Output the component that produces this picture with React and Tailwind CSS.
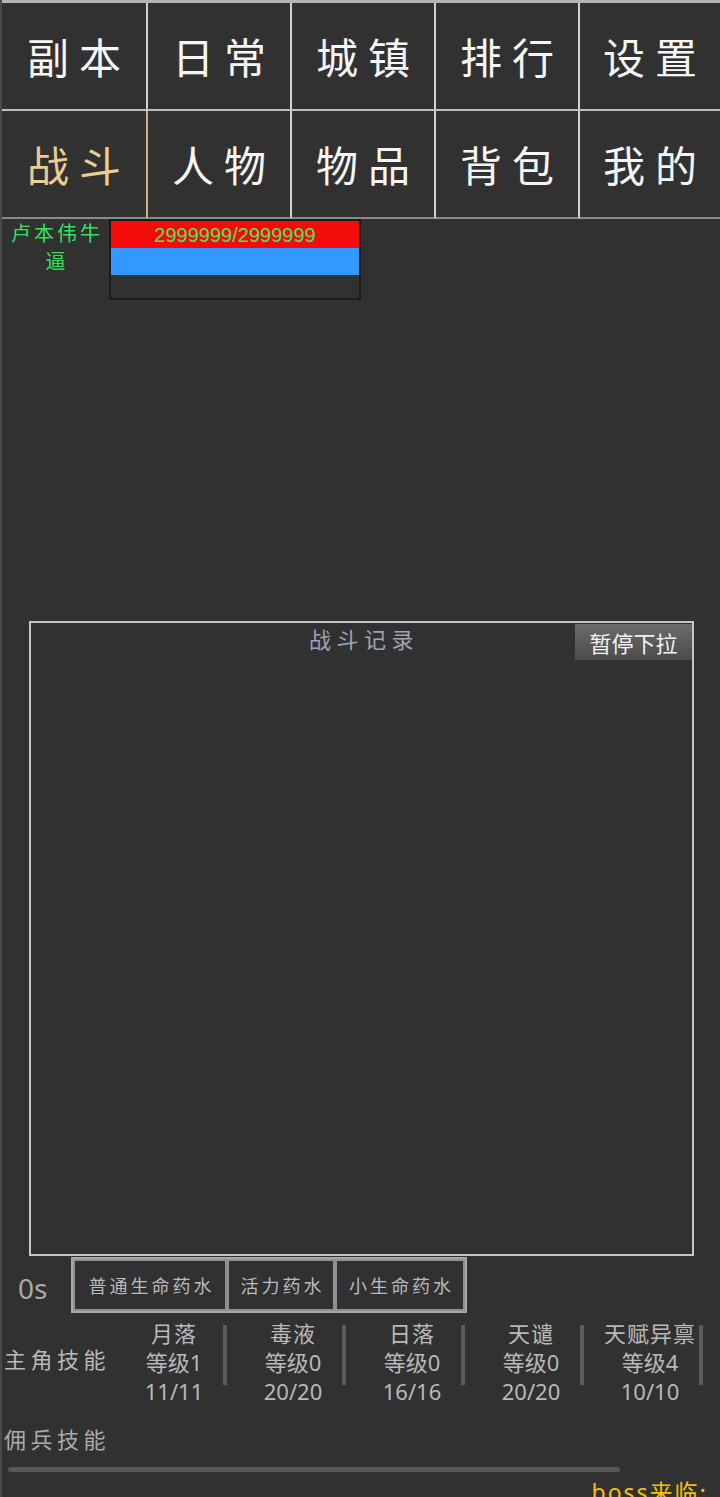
import React from "react";

const navRow1 = ["副本", "日常", "城镇", "排行", "设置"];
const navRow2 = ["战斗", "人物", "物品", "背包", "我的"];

const skills = [
  { name: "月落", lv: "等级1", cnt: "11/11" },
  { name: "毒液", lv: "等级0", cnt: "20/20" },
  { name: "日落", lv: "等级0", cnt: "16/16" },
  { name: "天谴", lv: "等级0", cnt: "20/20" },
  { name: "天赋异禀", lv: "等级4", cnt: "10/10" },
];

function NavCell({ label, row, col, active }) {
  const colBorder =
    col === 4
      ? "border-r-0"
      : active
      ? "border-r-2 border-r-[#cdb47c]"
      : "border-r-2 border-r-[#d0d0d0]";
  const rowBorder = row === 0 ? "border-b-2 border-b-[#bdbdbd]" : "border-b-2 border-b-[#8a8a8a]";
  return (
    <div
      className={`h-[108px] flex items-center justify-center ${colBorder} ${rowBorder}`}
    >
      <span
        className={`text-[42px] leading-none tracking-[10px] pl-[10px] -mt-[1px] ${
          active ? "text-[#ebcc92]" : "text-[#f6f6f6]"
        }`}
      >
        {label}
      </span>
    </div>
  );
}

export default function App() {
  return (
    <div className="w-[720px] min-h-[1497px] bg-[#313131] border-l-2 border-l-[#4a4a4a] overflow-hidden font-['Noto_Sans_CJK_SC',sans-serif]">
      {/* Nav */}
      <div className="grid grid-cols-[146px_144px_144px_144px_1fr] border-t-[3px] border-t-[#b4b4b4]">
        {navRow1.map((l, i) => (
          <NavCell key={l} label={l} row={0} col={i} />
        ))}
        {navRow2.map((l, i) => (
          <NavCell key={l} label={l} row={1} col={i} active={i === 0} />
        ))}
      </div>

      {/* Character */}
      <div className="flex items-start">
        <div className="w-[107px] text-center text-[20px] leading-[28px] tracking-[3px] pl-[3px] text-[#35e05f]">
          卢本伟牛逼
        </div>
        <div className="w-[252px] h-[81px] border-2 border-[#1b1b1b] flex flex-col">
          <div className="h-[27px] bg-[#f40c0c] flex items-center justify-center text-[20px] leading-none text-[#4ae65a] font-['Liberation_Sans',sans-serif]">
            2999999/2999999
          </div>
          <div className="h-[27px] bg-[#3398ff]"></div>
          <div className="flex-1"></div>
        </div>
      </div>

      {/* Battle log */}
      <div className="relative mt-[321px] ml-[27px] w-[665px] h-[635px] border-2 border-[#c6c6c6]">
        <div className="text-center text-[22px] leading-[30px] tracking-[5.5px] pl-[5px] text-[#9ea3b2]">
          战斗记录
        </div>
        <button className="absolute top-[1px] right-[0px] w-[117px] h-[36px] bg-gradient-to-b from-[#6c6c6c] to-[#4b4b4b] text-[22px] leading-none text-[#f2f2f2] font-['Noto_Sans_CJK_SC',sans-serif]">
          暂停下拉
        </button>
      </div>

      {/* Potions */}
      <div className="flex items-center h-[56px] mt-[1px]">
        <div className="pl-[16px] w-[69px] pt-[5px] text-[28px] leading-none text-[#a9a9a9] font-['Noto_Sans',sans-serif]">
          0s
        </div>
        <div className="flex h-[56px] border-2 border-[#a7a7ae]">
          {["普通生命药水", "活力药水", "小生命药水"].map((p, i) => (
            <div
              key={p}
              className={`h-full flex items-center justify-center border-2 border-[#8f8f96] text-[18px] leading-none tracking-[3px] pl-[3px] text-[#b9b9c0] ${
                i === 0 ? "w-[154px]" : i === 1 ? "w-[108px]" : "w-[130px]"
              }`}
            >
              {p}
            </div>
          ))}
        </div>
      </div>

      {/* Main skills */}
      <div className="flex items-start pt-[5px]">
        <div className="w-[124px] h-[80px] flex items-center pl-[2px] text-[22px] leading-none tracking-[4.5px] text-[#b9b9b9]">
          主角技能
        </div>
        {skills.map((s) => (
          <div key={s.name} className="w-[120px] flex items-start">
            <div className="w-[98px] text-center text-[22px] leading-[29px] text-[#b9b9b9] whitespace-nowrap">
              <div className="tracking-[1px]">{s.name}</div>
              <div>
                {s.lv.slice(0, 2)}
                <span className="font-['Noto_Sans',sans-serif]">{s.lv.slice(2)}</span>
              </div>
              <div className="font-['Noto_Sans',sans-serif]">{s.cnt}</div>
            </div>
            <div className="w-[4px] h-[60px] mt-[7px] bg-[#5b5b5b]"></div>
          </div>
        ))}
      </div>

      {/* Mercenary skills */}
      <div className="mt-[18px] pl-[2px] text-[22px] leading-[29px] tracking-[4.5px] text-[#ababab]">
        佣兵技能
      </div>
      <div className="mt-[14px] ml-[6px] w-[612px] h-[5px] rounded-sm bg-[#575757]"></div>
      <div className="mt-[5px] flex justify-end pr-[12px]">
        <span className="text-[23px] leading-[29px] tracking-[2px] text-[#f2c200]">
          <span className="font-['Noto_Sans',sans-serif]">boss</span>来临:
        </span>
      </div>
    </div>
  );
}
